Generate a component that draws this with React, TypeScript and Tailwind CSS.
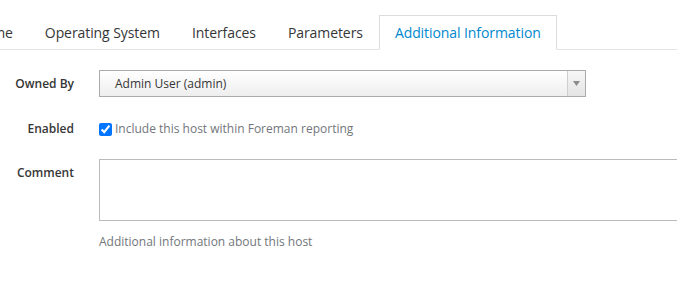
const TABS = ["Name", "Operating System", "Interfaces", "Parameters", "Additional Information"];
const ACTIVE = "Additional Information";

function Tabs() {
  return (
    <div className="flex items-end border-b border-[#e3e3e3] pt-[15px]">
      <div className="flex ml-[-42px]">
        {TABS.map((t) => {
          const active = t === ACTIVE;
          return (
            <div
              key={t}
              className={`-mb-px whitespace-nowrap border px-[15px] py-[7px] text-[14px] leading-[19px] tracking-[-0.08px] ${
                active
                  ? "border-[#dcdcdc] border-b-white bg-white text-[#0088ce]"
                  : "border-transparent text-[#363636]"
              }`}
            >
              {t}
            </div>
          );
        })}
      </div>
    </div>
  );
}

function Row({ label, children, className = "", labelClass = "" }: { label: string; children: React.ReactNode; className?: string; labelClass?: string }) {
  return (
    <div className={`flex ${className}`}>
      <div className={`w-[74px] shrink-0 text-right text-[12px] font-semibold leading-[18px] text-[#363636] ${labelClass}`}>{label}</div>
      <div className="ml-[25px] min-w-0 flex-1">{children}</div>
    </div>
  );
}

export default function App() {
  return (
    <div className="h-[281px] w-[677px] overflow-hidden bg-white" style={{ fontFamily: '"Open Sans", "Noto Sans", sans-serif' }}>
      <Tabs />

      <div className="pt-[20px]">
        <Row label="Owned By" className="items-center">
          <div className="flex h-[27px] w-[487px] items-stretch border border-[#aaa] bg-gradient-to-b from-white to-[#eeeeee]">
            <div className="flex flex-1 items-center pl-[15px] text-[12px] text-[#363636]">Admin User (admin)</div>
            <div className="flex w-[18px] items-center justify-center border-l border-[#cfcfcf] bg-gradient-to-b from-[#f6f6f6] to-[#e4e4e4]">
              <svg width="7" height="5" viewBox="0 0 7 5">
                <path d="M0 0h7L3.5 5z" fill="#8b8b8b" />
              </svg>
            </div>
          </div>
        </Row>

        <Row label="Enabled" className="mt-[23px] items-center">
          <label className="flex items-center gap-[3px] text-[12px] text-[#72767b]">
            <input type="checkbox" defaultChecked className="m-0 h-[13px] w-[13px] accent-[#0075ff]" />
            Include this host within Foreman reporting
          </label>
        </Row>

        <Row label="Comment" className="mt-[21px]" labelClass="pt-[5px]">
          <textarea className="block h-[62px] w-[620px] resize-none border border-[#bbb] outline-none" />
          <div className="mt-[12px] text-[12px] text-[#72767b]">Additional information about this host</div>
        </Row>
      </div>
    </div>
  );
}
